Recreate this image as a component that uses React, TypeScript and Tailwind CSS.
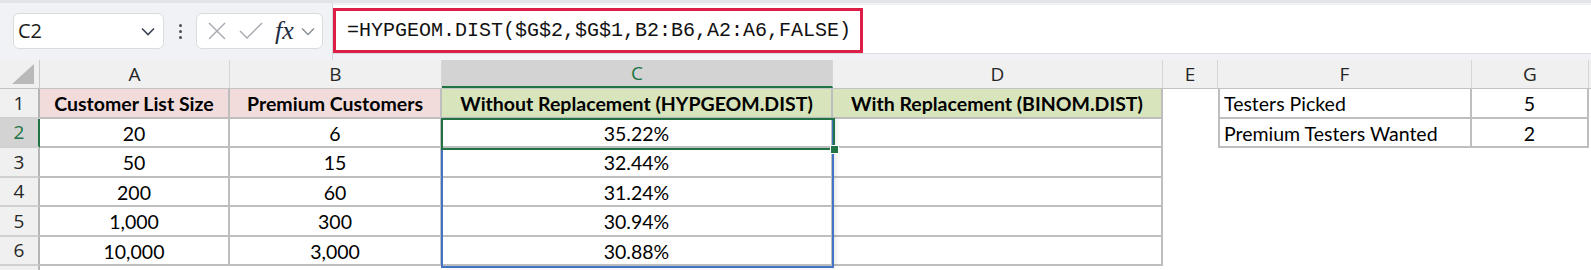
import React from "react";

const widths = ["w-[190px]", "w-[212px]", "w-[391px]", "w-[330px]", "w-[55px]", "w-[254px]", "w-[117px]"];
const letters = ["A", "B", "C", "D", "E", "F", "G"];
const heights = ["h-[30px]", "h-[29px]", "h-[30px]", "h-[29px]", "h-[30px]", "h-[29px]"];

type Cell = {
  text?: string;
  bold?: boolean;
  bg?: string;
  border?: boolean;
  edge?: boolean;
  left?: boolean;
};

const pink = "bg-[#f2dcdb]";
const green = "bg-[#d8e4bc]";

const rows: Cell[][] = [
  [
    { text: "Customer List Size", bold: true, bg: pink, border: true },
    { text: "Premium Customers", bold: true, bg: pink, border: true },
    { text: "Without Replacement (HYPGEOM.DIST)", bold: true, bg: green, border: true },
    { text: "With Replacement (BINOM.DIST)", bold: true, bg: green, border: true },
    {},
    { text: "Testers Picked", border: true, edge: true, left: true },
    { text: "5", border: true },
  ],
  [
    { text: "20", border: true },
    { text: "6", border: true },
    { text: "35.22%", border: true },
    { border: true },
    {},
    { text: "Premium Testers Wanted", border: true, edge: true, left: true },
    { text: "2", border: true },
  ],
  [{ text: "50", border: true }, { text: "15", border: true }, { text: "32.44%", border: true }, { border: true }, {}, {}, {}],
  [{ text: "200", border: true }, { text: "60", border: true }, { text: "31.24%", border: true }, { border: true }, {}, {}, {}],
  [{ text: "1,000", border: true }, { text: "300", border: true }, { text: "30.94%", border: true }, { border: true }, {}, {}, {}],
  [{ text: "10,000", border: true }, { text: "3,000", border: true }, { text: "30.88%", border: true }, { border: true }, {}, {}, {}],
];

function Toolbar() {
  return (
    <div className="flex flex-col h-[60px] bg-[#f0f2f5]">
      <div className="h-[3px] bg-[#e2e4e7]" />
      <div className="flex flex-1">
        <div className="flex items-start pt-[10px] pl-[13px]">
          {/* name box */}
          <div className="flex justify-between items-center bg-white pr-[8px] pl-[4px] border border-[#d9dbde] rounded-[6px] w-[151px] h-[36px]">
            <span className="font-['Open_Sans',sans-serif] text-[#1a1a1a] text-[20px]">C2</span>
            <svg width="14" height="9" viewBox="0 0 14 9" fill="none">
              <path d="M1 1.5 L7 7.5 L13 1.5" stroke="#3a4452" strokeWidth="1.6" />
            </svg>
          </div>
          <div className="flex flex-col justify-center items-center gap-[3px] w-[32px] h-[36px]">
            <span className="bg-[#4a4f57] rounded-full w-[3px] h-[3px]" />
            <span className="bg-[#4a4f57] rounded-full w-[3px] h-[3px]" />
            <span className="bg-[#4a4f57] rounded-full w-[3px] h-[3px]" />
          </div>
          {/* cancel / enter / fx */}
          <div className="flex items-center bg-white pl-[10px] border border-[#d9dbde] rounded-[6px] w-[127px] h-[36px]">
            <svg width="20" height="20" viewBox="0 0 20 20" fill="none">
              <path d="M2 2 L18 18 M18 2 L2 18" stroke="#a9adb3" strokeWidth="1.5" />
            </svg>
            <svg width="26" height="20" viewBox="0 0 26 20" fill="none" className="ml-[11px]">
              <path d="M2 10 L9 17 L24 2" stroke="#a9adb3" strokeWidth="1.5" />
            </svg>
            <span className="ml-[11px] font-['Liberation_Serif',serif] text-[#1e2c3f] text-[26px] italic leading-none">fx</span>
            <svg width="14" height="9" viewBox="0 0 14 9" fill="none" className="ml-[7px]">
              <path d="M1 1.5 L7 7.5 L13 1.5" stroke="#8b9097" strokeWidth="1.5" />
            </svg>
          </div>
        </div>
        {/* formula bar */}
        <div className="flex-1 ml-[9px] pt-[2px] pb-[6px] border-[#d3d5d8] border-l">
          <div className="bg-white pt-[4px] border-[#dcdde0] border-b h-full">
            <div className="flex items-center bg-white -mt-[1px] pl-[11px] border-[#dd1f48] border-[3px] w-[530px] h-[45px]">
              <span className="font-['Liberation_Mono',monospace] text-[#111] text-[20px] whitespace-nowrap">
                =HYPGEOM.DIST($G$2,$G$1,B2:B6,A2:A6,FALSE)
              </span>
            </div>
          </div>
        </div>
      </div>
    </div>
  );
}

function Sheet() {
  return (
    <div className="relative font-['Lato',sans-serif] text-[19.5px] text-black">
      {/* column headers */}
      <div className="flex bg-[#f0f0f0] border-[#c3c3c3] border-b h-[29px]">
        <div className="relative border-[#c9c9c9] border-r w-[40px] shrink-0">
          <svg width="22" height="20" viewBox="0 0 22 20" className="right-[5px] bottom-[4px] absolute">
            <polygon points="22,0 22,20 0,20" fill="#b9b9b9" />
          </svg>
        </div>
        {letters.map((l, i) => (
          <div
            key={l}
            className={`${widths[i]} shrink-0 flex items-center justify-center font-['Open_Sans',sans-serif] text-[19px] border-r border-[#d6d6d6] ${
              l === "C" ? "bg-[#d3d3d3] text-[#217346] border-b-2 border-b-[#217346]" : "text-[#262626]"
            }`}
          >
            {l}
          </div>
        ))}
      </div>
      {rows.map((row, r) => (
        <div key={r} className={`flex ${heights[r]}`}>
          <div
            className={`w-[40px] shrink-0 flex items-center justify-center font-['Open_Sans',sans-serif] text-[19px] border-r-2 border-b-2 border-b-[#d0d0d0] ${
              r === 1 ? "bg-[#d3d3d3] text-[#217346] border-r-[#217346]" : "bg-[#f0f0f0] text-[#262626] border-r-[#b5b5b5]"
            }`}
          >
            {r + 1}
          </div>
          {row.map((c, i) => (
            <div
              key={i}
              className={`${widths[i]} shrink-0 flex items-center pt-[2px] px-[4px] whitespace-nowrap ${c.bg ?? "bg-white"} ${
                c.border ? "border-r-2 border-b-2 border-[#bebebe]" : ""
              } ${c.edge ? "border-l-2" : ""} ${c.left ? "justify-start" : "justify-center"} ${c.bold ? "font-bold" : ""}`}
            >
              {c.text}
            </div>
          ))}
        </div>
      ))}
      <div className="flex h-[10px]">
        <div className="bg-[#f0f0f0] border-[#b5b5b5] border-r-2 w-[40px] shrink-0" />
        <div className="flex-1 bg-white" />
      </div>
      {/* selected range C2:C6 */}
      <div className="top-[58px] left-[441px] absolute shadow-[3px_0_4px_rgba(0,0,0,0.08)] border-[#4472c4] border-2 w-[393px] h-[150px] pointer-events-none" />
      {/* active cell C2 */}
      <div className="top-[58px] left-[441px] absolute border-[#217346] border-[2.5px] w-[394px] h-[32px] pointer-events-none" />
      <div className="top-[85px] left-[830px] absolute bg-[#217346] border border-white w-[9px] h-[9px]" />
    </div>
  );
}

export default function App() {
  return (
    <div className="bg-white w-[1591px] h-[270px] overflow-hidden">
      <Toolbar />
      <Sheet />
    </div>
  );
}
